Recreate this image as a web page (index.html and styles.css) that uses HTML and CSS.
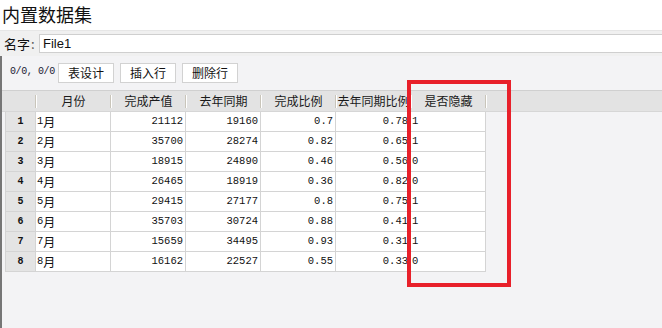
FILE: index.html
```html
<!DOCTYPE html>
<html lang="zh-CN">

<head>
  <meta charset="UTF-8">
  <title>内置数据集</title>
  <link rel="stylesheet" href="styles.css">
</head>

<body>
  <div class="title">内置数据集</div>

  <div class="name-row">
    <label class="name-label">名字<span class="colon">:</span></label>
    <input type="text" class="name-input" value="File1">
  </div>

  <div class="panel">
    <div class="toolbar">
      <span class="position">0/0, 0/0</span>
      <button class="tool-button">表设计</button>
      <button class="tool-button">插入行</button>
      <button class="tool-button">删除行</button>
    </div>

    <div class="grid">
      <div class="grid-header">
        <div class="head-cell row-head"></div>
        <div class="head-cell">月份</div>
        <div class="head-cell">完成产值</div>
        <div class="head-cell">去年同期</div>
        <div class="head-cell">完成比例</div>
        <div class="head-cell">去年同期比例</div>
        <div class="head-cell">是否隐藏</div>
      </div>

      <div class="grid-body">
        <div class="grid-row"><div class="cell row-num">1</div><div class="cell text"><span class="num">1</span>月</div><div class="cell num">21112</div><div class="cell num">19160</div><div class="cell num">0.7</div><div class="cell num">0.78</div><div class="cell text num">1</div></div>
        <div class="grid-row"><div class="cell row-num">2</div><div class="cell text"><span class="num">2</span>月</div><div class="cell num">35700</div><div class="cell num">28274</div><div class="cell num">0.82</div><div class="cell num">0.65</div><div class="cell text num">1</div></div>
        <div class="grid-row"><div class="cell row-num">3</div><div class="cell text"><span class="num">3</span>月</div><div class="cell num">18915</div><div class="cell num">24890</div><div class="cell num">0.46</div><div class="cell num">0.56</div><div class="cell text num">0</div></div>
        <div class="grid-row"><div class="cell row-num">4</div><div class="cell text"><span class="num">4</span>月</div><div class="cell num">26465</div><div class="cell num">18919</div><div class="cell num">0.36</div><div class="cell num">0.82</div><div class="cell text num">0</div></div>
        <div class="grid-row"><div class="cell row-num">5</div><div class="cell text"><span class="num">5</span>月</div><div class="cell num">29415</div><div class="cell num">27177</div><div class="cell num">0.8</div><div class="cell num">0.75</div><div class="cell text num">1</div></div>
        <div class="grid-row"><div class="cell row-num">6</div><div class="cell text"><span class="num">6</span>月</div><div class="cell num">35703</div><div class="cell num">30724</div><div class="cell num">0.88</div><div class="cell num">0.41</div><div class="cell text num">1</div></div>
        <div class="grid-row"><div class="cell row-num">7</div><div class="cell text"><span class="num">7</span>月</div><div class="cell num">15659</div><div class="cell num">34495</div><div class="cell num">0.93</div><div class="cell num">0.31</div><div class="cell text num">1</div></div>
        <div class="grid-row"><div class="cell row-num">8</div><div class="cell text"><span class="num">8</span>月</div><div class="cell num">16162</div><div class="cell num">22527</div><div class="cell num">0.55</div><div class="cell num">0.33</div><div class="cell text num">0</div></div>
      </div>
    </div>
  </div>

  <!-- annotation box over the last column -->
  <div class="highlight"></div>
</body>

</html>
```

FILE: styles.css
```css
body {
  margin: 0;
  background-color: #f3f3f5;
  color: #111;
  font-family: "Noto Sans CJK SC", "Liberation Sans", sans-serif;
  font-size: 12px;
  height: 328px;
  overflow: hidden;
}

.title {
  height: 30px;
  line-height: 28px;
  padding-left: 2px;
  font-size: 18px;
  background-color: #fff;
}

.name-row {
  display: flex;
  align-items: center;
  height: 26px;
  background-color: #f0f0f0;
  border-top: 1px solid #e6e6e6;
  box-sizing: border-box;
  padding-left: 4px;
}

.name-label {
  font-size: 13px;
  width: 35px;
}

.colon {
  color: #555;
  margin-left: 1px;
}

.name-input {
  flex-grow: 1;
  height: 19px;
  box-sizing: border-box;
  margin: 0;
  padding: 0 3px;
  border: 1px solid #cfcfcf;
  border-right: none;
  background-color: #fff;
  font-family: "Liberation Sans", sans-serif;
  font-size: 13px;
  color: #111;
  outline: none;
}

.panel {
  border-left: 2px solid #767676;
  height: 272px;
}

.toolbar {
  display: flex;
  align-items: center;
  gap: 6px;
  height: 34px;
  padding-left: 8px;
  padding-bottom: 1px;
  box-sizing: border-box;
}

.position {
  font-family: "Liberation Mono", monospace;
  font-size: 10px;
  letter-spacing: -0.4px;
  color: #1a1a33;
  width: 42px;
  white-space: nowrap;
  padding-bottom: 3px;
}

.tool-button {
  width: 56px;
  height: 20px;
  padding: 0;
  border: 1px solid #d2d2d2;
  background-color: #fff;
  font-family: "Noto Sans CJK SC", sans-serif;
  font-size: 12px;
  color: #111;
}

.grid {
  border-top: 1px solid #d0d0d0;
}

.grid-header {
  display: grid;
  grid-template-columns: 31px repeat(6, 75px);
  height: 20px;
  background-color: #e3e3e3;
  padding-left: 3px;
  border-bottom: 1px solid #d6d6d6;
}

.head-cell {
  line-height: 20px;
  text-align: center;
  font-size: 12px;
  position: relative;
  color: #1a1a1a;
  white-space: nowrap;
}

.head-cell::after {
  content: "";
  position: absolute;
  right: 0;
  top: 4px;
  height: 13px;
  width: 1px;
  background-color: #c9c5ba;
  box-shadow: 1px 0 0 #fff;
}

.grid-body {
  margin-left: 3px;
  width: 481px;
  background-color: #fff;
}

.grid-row {
  display: grid;
  grid-template-columns: 31px repeat(6, 75px);
  height: 20px;
}

.cell {
  display: flex;
  align-items: center;
  justify-content: flex-end;
  box-sizing: border-box;
  padding: 0 2px 1px 2px;
  border-right: 1px solid #d4d4d4;
  border-bottom: 1px solid #d4d4d4;
  white-space: nowrap;
  overflow: hidden;
}

.cell.row-num {
  justify-content: center;
  border-left: 1px solid #d4d4d4;
  background-color: #e4e4e4;
  font-family: "Liberation Mono", monospace;
  font-weight: bold;
  font-size: 10px;
}

.num {
  font-family: "Liberation Mono", monospace;
  font-size: 10.5px;
}

.cell.text {
  justify-content: flex-start;
  padding-left: 1px;
}

.highlight {
  position: absolute;
  left: 407px;
  top: 80px;
  width: 96px;
  height: 199px;
  border: 4px solid #e8202a;
}
```
